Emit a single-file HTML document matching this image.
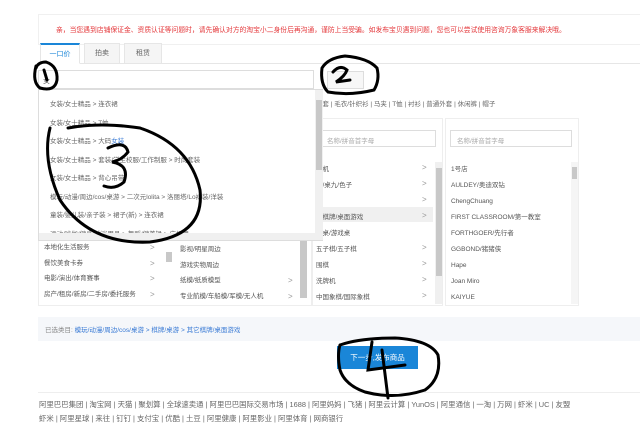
<!DOCTYPE html>
<html><head><meta charset="utf-8"><style>
*{margin:0;padding:0;box-sizing:border-box}
body{width:640px;height:421px;background:#fff;position:relative;overflow:hidden;font-family:"Liberation Sans","Noto Sans CJK SC",sans-serif;font-size:7px;color:#555}
.a{position:absolute;white-space:nowrap}
.notice{left:38px;top:14px;width:610px;height:31px;border:1px solid #f0f0f0;color:#e4393c;font-size:6.8px;padding:9px 0 0 17px}
.tab{top:43px;height:21px;border:1px solid #e6e6e6;background:#f5f5f5;text-align:center;line-height:19px;font-size:7px;color:#666}
.inp{border:1px solid #ddd;background:#fff}
.it{left:50px;font-size:6.5px;color:#666}
.panel{border:1px solid #eee;background:#fff}
.c{font-size:6.5px;color:#555}
.ar{font-size:8px;color:#999}
.sb{background:#c8c8c8}
</style></head><body>
<div class="a notice">亲，当您遇到店铺保证金、资质认证等问题时，请先确认对方的淘宝小二身份后再沟通，谨防上当受骗。如发布宝贝遇到问题，您也可以尝试使用咨询万象客服来解决哦。</div>
<div class="a" style="left:38px;top:63px;width:602px;height:1px;background:#e6e6e6"></div>
<div class="a tab" style="left:40px;width:40px;background:#fff;border-top:2px solid #1a86d8;border-bottom-color:#fff;color:#1a86d8">一口价</div>
<div class="a tab" style="left:84px;width:36px">拍卖</div>
<div class="a tab" style="left:124px;width:38px">租赁</div>
<div class="a inp" style="left:38px;top:70px;width:276px;height:19px;padding:5px 0 0 4px;font-size:7px">女</div>
<div class="a inp" style="left:327px;top:71px;width:37px;height:18px;background:#f7f7f7"></div>
<div class="a" style="left:316px;top:98px;font-size:6.5px;color:#666">外套 | 毛衣/针织衫 | 马夹 | T恤 | 衬衫 | 普通外套 | 休闲裤 | 帽子</div>
<!-- category columns -->
<div class="a panel" style="left:38px;top:118px;width:274px;height:188px"></div>
<div class="a panel" style="left:312px;top:118px;width:131px;height:188px"></div>
<div class="a panel" style="left:445px;top:118px;width:134px;height:188px"></div>
<div class="a inp" style="left:320px;top:130px;width:116px;height:17px;color:#aaa;font-size:6.5px;padding:4px 6px">名称/拼音首字母</div>
<div class="a inp" style="left:450px;top:130px;width:122px;height:17px;color:#aaa;font-size:6.5px;padding:4px 6px">名称/拼音首字母</div>
<div class="a" style="left:312px;top:207px;width:121px;height:15px;background:#f0f0f0"></div>
<div class="a" style="left:435px;top:162px;width:7px;height:142px;background:#f0f0f0"></div>
<div class="a sb" style="left:436px;top:168px;width:6px;height:108px"></div>
<div class="a" style="left:571px;top:162px;width:7px;height:142px;background:#f5f5f5"></div>
<div class="a sb" style="left:572px;top:167px;width:5px;height:12px"></div>
<div class="a c" style="left:316px;top:162px;line-height:16px">牌机<br>牌/桌九/色子<br>壳<br>它棋牌/桌面游戏<br>牌桌/游戏桌<br>五子棋/五子棋<br>围棋<br>洗牌机<br>中国象棋/国际象棋</div>
<div class="a ar" style="left:422px;top:160px;line-height:16px">&gt;<br>&gt;<br>&gt;<br>&gt;<br><br>&gt;<br>&gt;<br>&gt;<br>&gt;</div>
<div class="a c" style="left:451px;top:162px;line-height:16px">1号店<br>AULDEY/奥迪双钻<br>ChengChuang<br>FIRST CLASSROOM/第一教室<br>FORTHGOER/先行者<br>GGBOND/猪猪侠<br>Hape<br>Joan Miro<br>KAIYUE</div>
<div class="a c" style="left:44px;top:240px;line-height:15.5px">本地化生活服务<br>餐饮美食卡券<br>电影/演出/体育赛事<br>房产/租房/新房/二手房/委托服务</div>
<div class="a ar" style="left:150px;top:240px;line-height:15.5px">&gt;<br>&gt;<br>&gt;<br>&gt;</div>
<div class="a sb" style="left:166px;top:252px;width:6px;height:10px"></div>
<div class="a c" style="left:180px;top:242px;line-height:15.5px">影视/明星周边<br>游戏实物周边<br>纸模/纸质模型<br>专业航模/车船模/军模/无人机</div>
<div class="a ar" style="left:288px;top:273px;line-height:15.5px">&gt;<br>&gt;</div>
<div class="a sb" style="left:300px;top:240px;width:7px;height:58px"></div>
<!-- dropdown -->
<div class="a" style="left:38px;top:89px;width:285px;height:152px;background:#fff;border:1px solid #ddd"></div>
<div class="a it" style="top:96px;line-height:18.5px">女装/女士精品 &gt; 连衣裙<br>女装/女士精品 &gt; T恤<br>女装/女士精品 &gt; 大码<span style="color:#3a7bd5">女装</span><br>女装/女士精品 &gt; 套装/学生校服/工作制服 &gt; 时尚套装<br>女装/女士精品 &gt; 背心吊带<br>模玩/动漫/周边/cos/桌游 &gt; 二次元lolita &gt; 洛丽塔/Lo裙装/洋装<br>童装/婴儿装/亲子装 &gt; 裙子(新) &gt; 连衣裙<br>运动/瑜伽/健身/球迷用品 &gt; 舞蹈/健美操 &gt; 广场舞</div>
<div class="a" style="left:315px;top:90px;width:8px;height:143px;background:#f0f0f0"></div>
<div class="a sb" style="left:316px;top:100px;width:6px;height:70px"></div>
<div class="a" style="left:39px;top:233px;width:284px;height:7px;background:#f0f0f0"></div>
<!-- selected bar -->
<div class="a" style="left:38px;top:317px;width:602px;height:24px;background:#f5f7fa;padding:7px 0 0 7px;font-size:6.5px;color:#888">已选类目: <span style="color:#3a7bd5">模玩/动漫/周边/cos/桌游 &gt; 棋牌/桌游 &gt; 其它棋牌/桌面游戏</span></div>
<div class="a" style="left:337px;top:346px;width:81px;height:23px;background:#1a86d8;color:#fff;font-size:7.5px;text-align:center;line-height:23px">下一步,发布商品</div>
<div class="a" style="left:38px;top:392px;width:602px;height:1px;background:#eee"></div>
<div class="a" style="left:39px;top:399px;font-size:7.4px;color:#666">阿里巴巴集团 | 淘宝网 | 天猫 | 聚划算 | 全球速卖通 | 阿里巴巴国际交易市场 | 1688 | 阿里妈妈 | 飞猪 | 阿里云计算 | YunOS | 阿里通信 | 一淘 | 万网 | 虾米 | UC | 友盟</div>
<div class="a" style="left:39px;top:413px;font-size:7.4px;color:#666">虾米 | 阿里星球 | 来往 | 钉钉 | 支付宝 | 优酷 | 土豆 | 阿里健康 | 阿里影业 | 阿里体育 | 网商银行</div>
<svg class="a" style="left:0;top:0" width="640" height="421" fill="none" stroke="#000" stroke-width="3" stroke-linecap="round">
<path d="M36 66 Q32 82 40 88 Q55 92 57 80 Q58 66 46 62 Q38 62 36 68"/>
<path d="M44 70 L47 80"/>
<path d="M322 68 Q328 58 345 56 Q368 58 377 68 Q380 80 374 90 Q350 96 328 92 Q320 84 322 68"/>
<path d="M333 72 Q340 64 347 70 Q345 76 336 82 L350 80"/>
<path d="M50 128 Q42 160 60 200 Q90 245 150 242 Q205 235 200 190 Q190 145 140 128 Q100 122 68 128"/>
<path d="M108 148 Q125 140 128 152 Q122 160 112 162 Q130 165 124 182 Q115 190 104 186"/>
<path d="M340 345 Q360 338 395 338 Q430 340 438 355 Q442 378 425 390 Q395 400 365 392 Q345 385 340 370 Q337 355 340 345"/>
<path d="M372 342 L368 370 L405 365 M382 350 L388 398"/>
</svg>
</body></html>
